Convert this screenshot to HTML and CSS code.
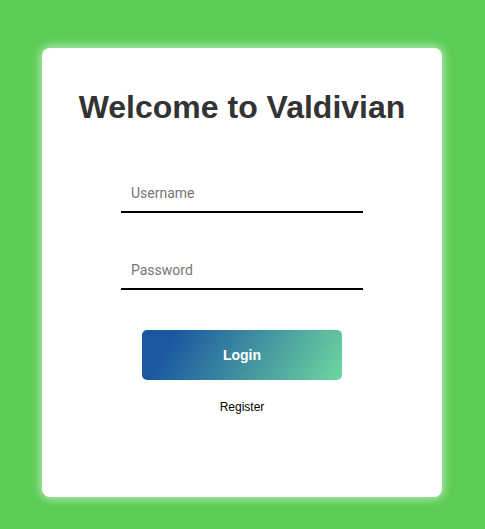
FILE: index.html
```html
<!DOCTYPE html>
<html>
<head>
<meta charset="utf-8">
<link rel="stylesheet" href="styles.css">
</head>
<body>
<div class="card">
  <h1 class="title">Welcome to Valdivian</h1>
  <form class="form">
    <input class="field" type="text" placeholder="Username">
    <input class="field field-second" type="password" placeholder="Password">
    <button class="login" type="button">Login</button>
    <a class="register" href="#">Register</a>
  </form>
</div>
</body>
</html>
```
FILE: styles.css
```css
html, body {
  margin: 0;
  padding: 0;
}
body {
  background: #5ccc55;
  width: 485px;
  height: 529px;
  font-family: "Liberation Sans", Arial, sans-serif;
  display: flex;
  justify-content: flex-start;
  align-items: flex-start;
}
.card {
  margin-top: 48px;
  margin-left: 42px;
  width: 400px;
  height: 449px;
  box-sizing: border-box;
  background: #fff;
  border-radius: 8px;
  box-shadow: 0 0 10px 2px rgba(255, 255, 255, 0.55);
  padding-top: 41px;
  display: flex;
  flex-direction: column;
  align-items: center;
}
.title {
  margin: 0;
  font-size: 32px;
  line-height: 37px;
  font-weight: bold;
  color: #333;
  text-align: center;
}
.form {
  margin-top: 49px;
  display: flex;
  flex-direction: column;
  align-items: center;
}
.field {
  width: 242px;
  height: 38px;
  box-sizing: border-box;
  padding: 10px;
  border: none;
  border-bottom: 2px solid #000;
  outline: none;
  font-family: Roboto, "Liberation Sans", sans-serif;
  font-size: 14px;
  line-height: 16px;
  color: #333;
  background: transparent;
  margin: 0;
}
.field::placeholder {
  color: #757575;
}
.field-second {
  margin-top: 39px;
}
.login {
  margin-top: 40px;
  width: 200px;
  height: 50px;
  border: none;
  border-radius: 5px;
  background: linear-gradient(120deg, #1a58a0 15%, #6fd6a0 100%);
  color: #fff;
  font-family: "Liberation Sans", Arial, sans-serif;
  font-weight: bold;
  font-size: 14px;
  cursor: pointer;
}
.register {
  margin-top: 20px;
  font-size: 12px;
  line-height: 14px;
  color: #000;
  text-decoration: none;
}
```
